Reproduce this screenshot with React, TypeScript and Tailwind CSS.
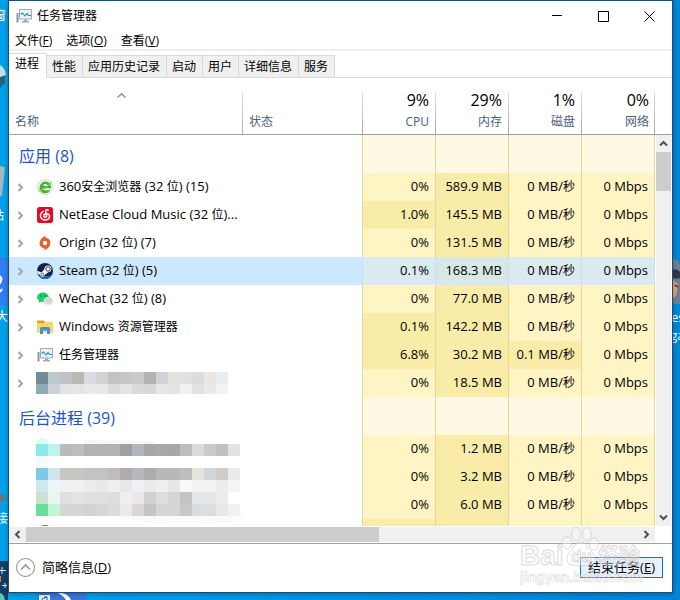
import React, { useState } from "react";

type IconName = "browser" | "music" | "origin" | "steam" | "wechat" | "folder" | "monitor";

interface IProcess {
  name: string;
  icon?: IconName;
  cpu: string;
  memory: string;
  disk: string;
  hot?: string[];
}

const apps: IProcess[] = [
  { name: "360安全浏览器 (32 位) (15)", icon: "browser", cpu: "0%", memory: "589.9 MB", disk: "0 MB/秒" },
  { name: "NetEase Cloud Music (32 位)...", icon: "music", cpu: "1.0%", memory: "145.5 MB", disk: "0 MB/秒", hot: ["cpu"] },
  { name: "Origin (32 位) (7)", icon: "origin", cpu: "0%", memory: "131.5 MB", disk: "0 MB/秒" },
  { name: "Steam (32 位) (5)", icon: "steam", cpu: "0.1%", memory: "168.3 MB", disk: "0 MB/秒" },
  { name: "WeChat (32 位) (8)", icon: "wechat", cpu: "0%", memory: "77.0 MB", disk: "0 MB/秒" },
  { name: "Windows 资源管理器", icon: "folder", cpu: "0.1%", memory: "142.2 MB", disk: "0 MB/秒", hot: ["cpu"] },
  { name: "任务管理器", icon: "monitor", cpu: "6.8%", memory: "30.2 MB", disk: "0.1 MB/秒", hot: ["cpu", "disk"] },
  { name: "", cpu: "0%", memory: "18.5 MB", disk: "0 MB/秒" },
];

const background: IProcess[] = [
  { name: "", cpu: "0%", memory: "1.2 MB", disk: "0 MB/秒" },
  { name: "", cpu: "0%", memory: "3.2 MB", disk: "0 MB/秒" },
  { name: "", cpu: "0%", memory: "6.0 MB", disk: "0 MB/秒" },
];

const tabs = ["进程", "性能", "应用历史记录", "启动", "用户", "详细信息", "服务"];

const usage = [
  { label: "CPU", value: "9%" },
  { label: "内存", value: "29%" },
  { label: "磁盘", value: "1%" },
  { label: "网络", value: "0%" },
];

const appMosaic = [
  "748a99 bdcacb c2c1c7 b8bab3 dcdbe2 d3d2ce c3c3c3 c6c6c6 cacaca b3b3b3 d0d2d7 e1e2df dfe1e1 dadcdf eae6e3 ebedf2",
  "92abb7 cdd2d8 e3e3e5 e5e5e8 e9e9ec e8e8e8 d8dddc e5e4e2 d9dadb d9d8d5 e4e6e8 e3e3e3 f1f1f1 dfe1e4 e7e9ea f3f3f3",
];

const backgroundMosaic = [
  "88ebe8 bdf4f0 bcb9b7 bebebe b3b3b3 b0b3b0 b3b2b0 9f9f9f b0b6ba a6a6a4 a9a9a9 a7a7a7 bcbdc0 dcdbd8 c9cbcd c1c0be dfe3e7",
  "f5fbff fcfeff ffffff ffffff ffffff ffffff ffffff ffffff ffffff ffffff ffffff ffffff ffffff ffffff ffffff ffffff ffffff",
  "7fc9e8 cfe4ec c8c5c3 c7c7c5 c3c3c3 c2c4c2 bfbcb9 aeacac b4b9bf adabac b9b8b6 b8b8b8 bdbfbe e7e4e0 d3d6d9 cecccb e9ebed",
  "cce9f0 eef4f7 f1f1f2 f1f1f1 ececec e9e9e9 efefef e8e8e8 eef0f3 ebebec efefef e6e6e6 f8faf9 f4f3f2 f1f2f4 ededec f5f5f5",
  "c9e2d5 e9f6ed dfdfe1 e3e3e3 dfe0df dce0df dddddf efefef ebe8e7 ced1d2 dddddd d5d5d5 c3c3c6 e3e8ea e6e6e8 ececec ffffff",
  "64e09a c2f4d6 d8d5d4 d4d7d5 cfd3d2 d7d7d6 dcdcdc e9eaea d8d7d4 c4c6c6 d6d6d6 d6d6d7 c8c8c6 dadcdf dddddd e9e8e7 f0f1f4",
];

const menus = [
  { text: "文件", key: "F" },
  { text: "选项", key: "O" },
  { text: "查看", key: "V" },
];

// latin at 13px, chinese at 12px
function Label({ text }: { text: string }) {
  const parts = text.split(/([\u4e00-\u9fff]+)/);
  return (
    <span className="text-[13px] leading-4 whitespace-nowrap">
      {parts.map((p, i) => (i % 2 ? <span key={i} className="text-xs leading-4">{p}</span> : p))}
    </span>
  );
}

function Mosaic({ rows, top, height, children }: { rows: string[]; top: number; height: number; children?: React.ReactNode }) {
  return (
    <svg width="210" height={height} className="block">
      {children}
      <g shapeRendering="crispEdges">
        {rows.map((row, y) =>
          row.split(" ").map((c, x) => (
            <rect key={`${x}-${y}`} x={x * 12} y={top + y * 12} width="12" height="12" fill={`#${c}`} />
          ))
        )}
      </g>
    </svg>
  );
}

function AppIcon({ name }: { name: IconName }) {
  return (
    <svg width="16" height="16" viewBox="0 0 16 16" className="shrink-0">
      {name === "browser" && (
        <>
          <circle cx="8" cy="8" r="7.500" fill="#f4f8f2" stroke="#c3cfbe" strokeWidth=".8" />
          <path d="M14 9.300H5.800c.2 2.200 3.600 2.900 7.600 1.200-1 2.600-3 4-5.600 3.700C4.400 13.900 2.300 11.500 2.600 8.200 2.900 4.800 5.500 2.300 8.700 2.400c3.600.1 5.700 2.900 5.300 6.900zM5.900 7.100h4.800c0-2.600-4.200-2.900-4.800 0z" fill="#44b52b" fillRule="evenodd" />
          <path d="M1.400 11.800C4.500 11.400 12 8 14.600 2.600" fill="none" stroke="#7fd45f" strokeWidth="1.100" />
        </>
      )}
      {name === "music" && (
        <>
          <rect width="16" height="16" rx="2.500" fill="#e20a24" />
          <path d="M11.200 3.200c-1.200-1.100-2.800-.4-2.500 1.100l.9 4.300c.3 2-2.700 2.300-2.800.3-.1-1.600 1.400-2.500 3-2.400 3.700.3 3.900 6.100-1.200 6.500-3.600.2-5.500-2.300-5.200-4.900.2-1.700 1.300-3.100 2.900-3.700" fill="none" stroke="#fff" strokeWidth="1.500" strokeLinecap="round" />
        </>
      )}
      {name === "origin" && (
        <path fillRule="evenodd" d="M9.200.5C8.500 1.200 8.300 2 8.400 2.700c3.200.1 5.300 2.700 5 5.600-.3 3.200-3 6.100-6.600 7.200.7-.7.9-1.500.8-2.200-3.200-.1-5.300-2.700-5-5.600C2.900 4.500 5.600 1.600 9.200.5zM8 5.800a2.200 2.200 0 1 0 0 4.400 2.200 2.200 0 0 0 0-4.400z" fill="#e4602f" />
      )}
      {name === "steam" && (
        <>
          <circle cx="8" cy="8" r="8" fill="#14204a" />
          <path d="M.7 11.200A8 8 0 0 0 15.600 10.500C13 14 5 13.500.7 11.200z" fill="#1d6fa5" />
          <path d="M.1 7.800 4.600 9.600 7.300 6.300Q7.600 2.600 11 2.600q3.400.2 3.400 3.500-.2 3.200-3.500 3.400L7.700 11.900Q7.200 13.900 5.200 13.900 3.400 13.700 3 11.800L.6 10.800z" fill="#fff" />
          <circle cx="11" cy="6" r="2.200" fill="#fff" stroke="#14204a" strokeWidth=".9" />
          <circle cx="5.300" cy="11.500" r="1.500" fill="none" stroke="#14396a" strokeWidth=".7" />
        </>
      )}
      {name === "wechat" && (
        <>
          <path d="M6 1.500C2.700 1.500.1 3.600.1 6.300c0 1.500.8 2.800 2.100 3.700l-.6 1.900 2.200-1.200c.7.200 1.400.3 2.200.3 3.300 0 5.800-2.100 5.800-4.700S9.300 1.500 6 1.500z" fill="#1fd065" />
          <path d="M11.200 6c-2.700 0-4.700 1.700-4.700 3.900s2 3.900 4.700 3.900c.6 0 1.200-.1 1.700-.3l1.600.9-.4-1.500c1.100-.7 1.800-1.800 1.800-3 0-2.200-2-3.900-4.700-3.900z" fill="#dcdcdc" />
          <circle cx="4.100" cy="5" r=".8" fill="#0b7c38" />
          <circle cx="8" cy="5" r=".8" fill="#0b7c38" />
          <circle cx="9.700" cy="9" r=".6" fill="#888" />
          <circle cx="12.800" cy="9" r=".6" fill="#888" />
        </>
      )}
      {name === "folder" && (
        <>
          <path d="M0 1.500h7l1 1.500h-1v3H0z" fill="#e2a11b" />
          <path d="M0 4h6.500L8 2.800h8V13.500H0z" fill="#fdd367" />
          <path d="M0 4.500h16V13.500H0z" fill="#ffd366" />
          <path d="M3 15V9.500Q3 8 4.500 8h7Q13 8 13 9.500V15h-3v-3.500H6V15z" fill="#3c93dd" />
        </>
      )}
      {name === "monitor" && (
        <>
          <path d="M.5 5h2v9.500h-2z" fill="#8c959a" />
          <path d="M1 6.500h1v1H1z" fill="#45d645" />
          <path d="M3.500 1.500h12v9.500h-12z" fill="#e6f4fa" stroke="#a3a9ac" />
          <path d="M4.500 6.500 6.500 5 9 8l2-2.500 1.500 2H15" fill="none" stroke="#2b93c4" strokeWidth="1.100" />
          <path d="M8 11.500h3v1.500h2v1.500H6V13h2z" fill="#a4abaf" />
        </>
      )}
    </svg>
  );
}

function Chevron({ dir, className }: { dir: "up" | "down" | "left" | "right"; className?: string }) {
  const paths = {
    up: "M1 6.500 4.500 3 8 6.500",
    down: "M1 2.500 4.500 6 8 2.500",
    left: "M6.500 1 3 4.500 6.500 8",
    right: "M2.500 1 6 4.500 2.500 8",
  };
  return (
    <svg width="9" height="9" viewBox="0 0 9 9" className={className}>
      <path d={paths[dir]} fill="none" stroke="currentColor" strokeWidth="2" />
    </svg>
  );
}

function ProcessRow({ item, selected, first, onSelect }: {
  item: IProcess; selected?: boolean; first?: React.ReactNode; onSelect?: () => void;
}) {
  const cells = [
    { key: "cpu", value: item.cpu },
    { key: "memory", value: item.memory },
    { key: "disk", value: item.disk },
    { key: "network", value: "0 Mbps" },
  ];
  const bg = (key: string) => {
    const hot = key === "memory" || item.hot?.includes(key);
    if (selected) return hot ? "bg-[#d7e8e7] border-[#cfdfe6]" : "bg-[#daeaee] border-[#cfdfe6]";
    return hot ? "bg-[#f9eca8] border-[#e8d59c]" : "bg-[#fff4c4] border-[#e8d59c]";
  };
  return (
    <tr className={selected ? "bg-[#cce8ff]" : ""} onClick={onSelect}>
      {first}
      {cells.map((c) => (
        <td key={c.key} className={`h-7 p-0 pr-1.5 pb-0.5 text-right border-l last:border-r ${bg(c.key)}`}>
          <Label text={c.value} />
        </td>
      ))}
    </tr>
  );
}

function GroupRow({ title }: { title: string }) {
  return (
    <tr>
      <th colSpan={2} scope="rowgroup" className="h-[38px] p-0 pt-1 pl-2.5 text-left text-base leading-6 font-normal text-[#1e55c5]">{title}</th>
      {usage.map((u) => (
        <td key={u.label} className="p-0 bg-[#fff8e3] border-l last:border-r border-[#e8d59c]" />
      ))}
    </tr>
  );
}

function Watermark() {
  return (
    <div className="absolute right-7 bottom-1 w-[124px] pointer-events-none opacity-70">
      <svg width="124" height="64" viewBox="0 0 124 64" fill="#fff" fillOpacity=".5" stroke="#cdcdcd" strokeWidth="1" fontFamily="Liberation Sans, Noto Sans CJK SC, sans-serif" fontWeight="bold">
        <text x="0" y="41" fontSize="28">Bai</text>
        <ellipse cx="56" cy="10" rx="4.500" ry="6.500" />
        <ellipse cx="67" cy="10" rx="4.500" ry="6.500" />
        <ellipse cx="47" cy="19" rx="4.500" ry="6" />
        <ellipse cx="74" cy="20" rx="4.500" ry="6" />
        <path d="M61 18c-6 0-7 7-11 10-4 4-5 12 2 13 5 1 13 1 18 0 7-1 6-9 2-13-4-3-5-10-11-10z" />
        <text x="51" y="38" fontSize="17">du</text>
        <text x="78" y="39" fontSize="21">经验</text>
        <text x="0" y="58" fontSize="14" strokeWidth=".6">jingyan.baidu.com</text>
      </svg>
    </div>
  );
}

// desktop items peeking out around the window
function Desktop() {
  return (
    <div className="absolute inset-0 overflow-hidden text-xs leading-4 text-white" aria-hidden="true">
      <span className="absolute -left-1.5 top-2">窗</span>
      <span className="absolute -left-2 top-[208px]">站</span>
      <span className="absolute -left-1 top-[309px]">大</span>
      <span className="absolute -left-1 top-[511px]">接</span>
      <svg width="8" height="600" className="absolute left-0 top-0">
        <circle cx="-7" cy="76" r="13" fill="#bfe2ee" />
        <path d="M0 77 6 75 5 83 0 88z" fill="#26627f" />
        <path d="M0 166 5 167 2 195 0 197z" fill="#a8b7bc" />
        <path d="M0 257h4l4 5v43H0z" fill="#347df0" />
        <path d="M0 276q3 4-1 8M0 292l2-3" stroke="#fff" strokeWidth="2" fill="none" />
        <path d="M0 493 7 498 0 503z" fill="#66777e" />
        <rect y="561" width="8" height="39" fill="#123f66" />
        <path d="M2 567v7M-1 570.500h7M5 583v5M2 585.500h5" stroke="#cde8ff" />
        <path d="M0 576h1v6H0z" fill="#d07a39" />
        <path d="M0 593q4 1 5 7H0z" fill="#63c7ae" />
      </svg>
      <svg width="8" height="90" className="absolute right-0 top-[255px]">
        <path d="M0 3 5 5 8 9V49H0z" fill="#6c7f94" />
        <path d="M0 16q4-4 8 1v6q-4 2-8-1z" fill="#303647" />
        <path d="M1 25 6 29 4 41 0 44z" fill="#dfa07e" />
        <path d="M3 30l3 2" stroke="#9b2b22" strokeWidth="2" />
      </svg>
      <span className="absolute -right-1 top-[310px]">es</span>
      <span className="absolute -right-1 top-[328px]">ga</span>
      <svg width="48" height="8" className="absolute left-[38px] bottom-0">
        <path d="M0 0h48v8H0z" fill="#3a74dc" />
        <path d="M20 0q10 1 13 8h-5Q25 3 18 0z" fill="#fff" />
        <path d="M1 3h11v5H1z" fill="#e9eef3" />
        <path d="M4 8V7l5-2M6 5h3v3" fill="none" stroke="#1d5fa8" />
      </svg>
    </div>
  );
}

export default function App() {
  const [tab, setTab] = useState("进程");
  const [selected, setSelected] = useState(3);

  return (
    <div className="relative min-h-screen bg-linear-to-r from-[#00a0ea] to-[#0085d6] pl-2 pr-[7px] pb-[7px] font-['Open_Sans','Noto_Sans_CJK_SC',sans-serif] text-xs leading-4 text-black">
      <Desktop />
      <main className="relative bg-white border border-[#1b4d70] shadow-[0_1px_4px_rgba(0,0,0,0.3)]">
        <header className="h-[30px] flex items-center">
          <div className="flex items-center gap-[5px] pl-[7px]">
            <AppIcon name="monitor" />
            <h1>任务管理器</h1>
          </div>
          <div className="ml-auto flex self-stretch">
            <button aria-label="最小化" className="w-[46px] flex items-center justify-center">
              <svg width="11" height="11"><path d="M0 4.500h10" stroke="#000" /></svg>
            </button>
            <button aria-label="最大化" className="w-[46px] flex items-center justify-center">
              <svg width="11" height="11"><path d="M.5.5h10v10h-10z" fill="none" stroke="#000" /></svg>
            </button>
            <button aria-label="关闭" className="w-[46px] flex items-center justify-center">
              <svg width="11" height="11"><path d="M.5.5 10.500 10.500M10.500.5.5 10.500" stroke="#000" /></svg>
            </button>
          </div>
        </header>

        <nav className="h-5 flex items-start gap-3.5 pl-1.5 pt-0.5 border-b-2 border-[#f0f0f0]">
          {menus.map((m) => (
            <button key={m.key}>{m.text}(<u>{m.key}</u>)</button>
          ))}
        </nav>

        <div role="tablist" className="h-[27px] pt-0.5 flex items-end border-b border-[#d9d9d9]">
          {tabs.map((t) => (
            <button
              key={t}
              role="tab"
              aria-selected={t === tab}
              onClick={() => setTab(t)}
              className={t === tab
                ? "h-[25px] -mb-px pl-1.5 pr-[7px] pb-1 bg-white border-t border-r border-[#d9d9d9]"
                : "h-[22px] pl-[5px] pr-1.5 bg-[#f0f0f0] border-t border-r border-[#d9d9d9]"}
            >
              {t}
            </button>
          ))}
        </div>

        <div className="flex">
          <table className="flex-1 table-fixed border-separate border-spacing-0">
            <colgroup>
              <col className="w-[234px]" />
              <col />
              <col className="w-[73px]" />
              <col className="w-[73px]" />
              <col className="w-[73px]" />
              <col className="w-[74px]" />
            </colgroup>
            <thead className="text-[#4c607a]">
              <tr>
                <th className="relative h-[57px] p-0 pl-1.5 pb-1 align-bottom text-left font-normal border-b border-[#a0a0a0]">
                  <svg width="9" height="5" className="absolute left-[108px] top-[15px]">
                    <path d="M.5 4.500 4.500.7 8.500 4.500" fill="none" stroke="#7d8aa0" strokeWidth="1.200" />
                  </svg>
                  <button>名称</button>
                  <span className="absolute right-0 top-[13px] bottom-0 w-px bg-linear-to-b from-[#e4e4e4] to-[#a8a8a8]" />
                </th>
                <th className="relative p-0 pl-1.5 pb-1 align-bottom text-left font-normal border-b border-[#a0a0a0]">
                  <button>状态</button>
                  <span className="absolute -right-px top-[13px] bottom-0 w-px bg-linear-to-b from-[#e4e4e4] to-[#a8a8a8]" />
                </th>
                {usage.map((u) => (
                  <th key={u.label} className="group relative p-0 pr-1.5 pb-1 align-bottom text-right font-normal border-b border-[#a0a0a0]">
                    <button className="text-right">
                      <span className="block pb-0.5 text-base leading-6 text-black">{u.value}</span>
                      <span className="block">{u.label}</span>
                    </button>
                    <span className="absolute -right-px group-last:right-0 top-[13px] bottom-0 w-px bg-linear-to-b from-[#e4e4e4] to-[#a8a8a8]" />
                  </th>
                ))}
              </tr>
            </thead>
            <tbody>
              <GroupRow title="应用 (8)" />
              {apps.map((a, i) => (
                <ProcessRow
                  key={i}
                  item={a}
                  selected={i === selected}
                  onSelect={() => setSelected(i)}
                  first={
                    <td colSpan={2} className="h-7 p-0 pl-[7px]">
                      <div className="flex items-center">
                        <button aria-label="展开" className="mr-[11px] text-[#a6a6a6]"><Chevron dir="right" className="block" /></button>
                        {a.icon ? (
                          <span className="flex items-center gap-1.5 pl-px">
                            <AppIcon name={a.icon} />
                            <span className="flex pb-0.5"><Label text={a.name} /></span>
                          </span>
                        ) : (
                          <Mosaic rows={appMosaic} top={0} height={22} />
                        )}
                      </div>
                    </td>
                  }
                />
              ))}
              <GroupRow title="后台进程 (39)" />
              {background.map((b, i) => (
                <ProcessRow
                  key={i}
                  item={b}
                  first={i === 0 && (
                    <td colSpan={2} rowSpan={4} className="p-0 pl-[27px] align-top">
                      <Mosaic rows={backgroundMosaic} top={9} height={91}>
                        <path d="M0 9q0-6 7-6 5 1 6 6z" fill="#dcfbf7" />
                        <path d="M48 5l72 1v4H48z" fill="#f7f7f7" />
                        <path d="M78 80h130q-2 7-20 7-90 4-110-7z" fill="#fafafa" />
                        <path d="M5 91q4-2 8 0z" fill="#3f8f2a" />
                      </Mosaic>
                    </td>
                  )}
                />
              ))}
              <tr>
                <td className="h-[7px] p-0 bg-[#f9eca8] border-l border-[#e8d59c]" />
                <td className="p-0 bg-[#f9eca8] border-l border-[#e8d59c]" />
                <td className="p-0 bg-[#fff4c4] border-l border-[#e8d59c]" />
                <td className="p-0 bg-[#fff4c4] border-x border-[#e8d59c]" />
              </tr>
            </tbody>
          </table>
          <div className="w-[17px] flex flex-col">
            <div className="h-[57px] border-b border-[#a0a0a0]" />
            <div className="flex-1 mx-px flex flex-col bg-[#f0f0f0] text-[#505050]">
              <button aria-label="向上滚动" className="h-[17px] flex items-center justify-center"><Chevron dir="up" /></button>
              <div className="h-[39px] bg-[#cdcdcd]" />
              <button aria-label="向下滚动" className="mt-auto h-[17px] flex items-center justify-center"><Chevron dir="down" /></button>
            </div>
          </div>
        </div>

        <div className="my-px mr-[17px] h-[15px] flex bg-[#f0f0f0] text-[#505050]">
          <button aria-label="向左滚动" className="w-[17px] flex items-center justify-center"><Chevron dir="left" /></button>
          <div className="w-[353px] bg-[#cdcdcd]" />
          <button aria-label="向右滚动" className="ml-auto w-[17px] flex items-center justify-center"><Chevron dir="right" /></button>
        </div>

        <footer className="relative h-[49px] pl-[7px] pr-[9px] pb-0.5 flex items-center justify-between border-t border-[#a0a0a0] text-[13px]">
          <button className="flex items-center gap-[7px]">
            <svg width="19" height="19" viewBox="0 0 19 19" fill="none">
              <circle cx="9.500" cy="9.500" r="9" stroke="#8a8a8a" />
              <path d="M5 11.500 9.500 7 14 11.500" stroke="#9a9a9a" strokeWidth="1.600" />
            </svg>
            <span>简略信息(<u>D</u>)</span>
          </button>
          <button className="h-[21px] px-[7px] bg-[#e5f1fb] border border-[#0078d7] leading-[19px]">结束任务(<u>E</u>)</button>
          <Watermark />
        </footer>
      </main>
    </div>
  );
}
